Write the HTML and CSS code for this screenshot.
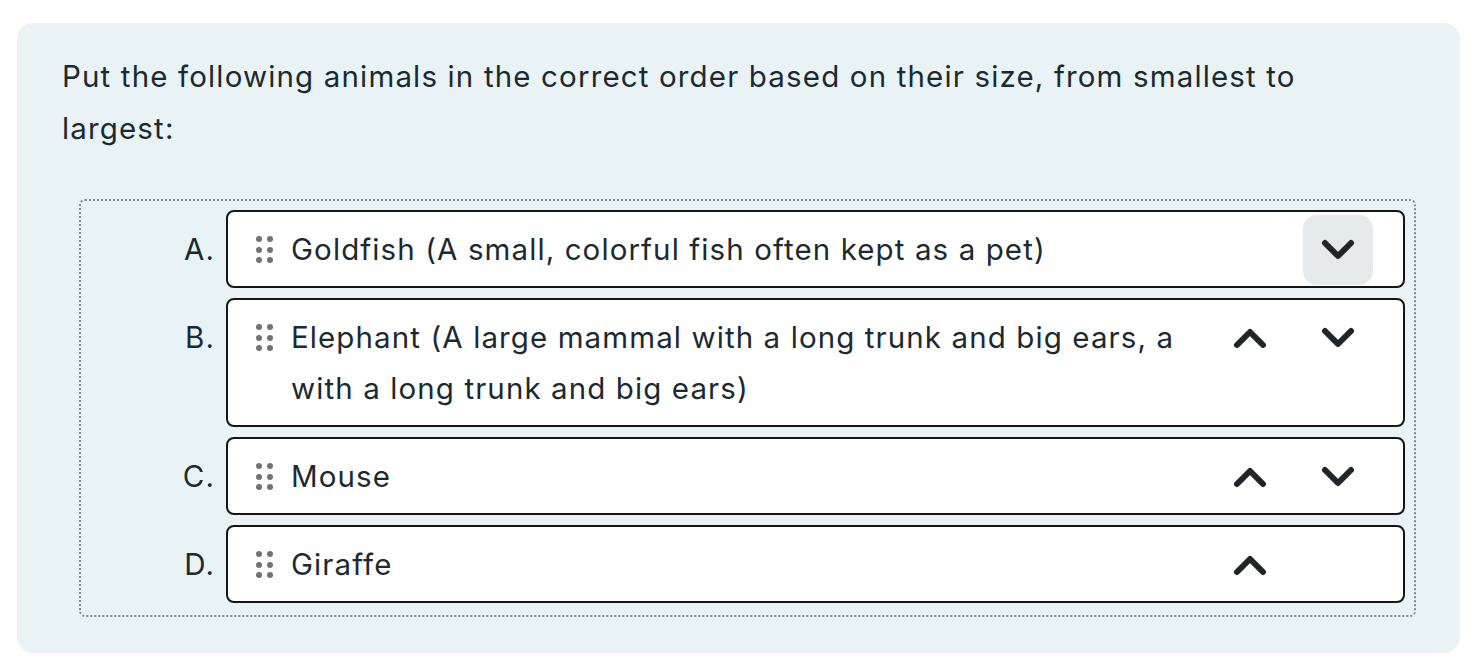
FILE: index.html
```html
<!DOCTYPE html>
<html>
<head>
<meta charset="utf-8">
<link rel="stylesheet" href="styles.css">
</head>
<body>
<div class="card">
  <p class="question">Put the following animals in the correct order based on their size, from smallest to largest:</p>
  <div class="list">
    <div class="row">
      <div class="label">A.</div>
      <div class="item">
        <span class="handle"><i></i><i></i><i></i><i></i><i></i><i></i></span>
        <span class="text">Goldfish (A small, colorful fish often kept as a pet)</span>
        <span class="btns">
          <span class="btn empty"></span>
          <span class="btn active"><svg viewBox="0 0 36 24" width="36" height="24"><polyline points="5,5 18,18 31,5"/></svg></span>
        </span>
      </div>
    </div>
    <div class="row">
      <div class="label">B.</div>
      <div class="item">
        <span class="handle"><i></i><i></i><i></i><i></i><i></i><i></i></span>
        <span class="text">Elephant (A large mammal with a long trunk and big ears, a with a long trunk and big ears)</span>
        <span class="btns">
          <span class="btn"><svg viewBox="0 0 36 24" width="36" height="24"><polyline points="5,19 18,6 31,19"/></svg></span>
          <span class="btn"><svg viewBox="0 0 36 24" width="36" height="24"><polyline points="5,5 18,18 31,5"/></svg></span>
        </span>
      </div>
    </div>
    <div class="row">
      <div class="label">C.</div>
      <div class="item">
        <span class="handle"><i></i><i></i><i></i><i></i><i></i><i></i></span>
        <span class="text">Mouse</span>
        <span class="btns">
          <span class="btn"><svg viewBox="0 0 36 24" width="36" height="24"><polyline points="5,19 18,6 31,19"/></svg></span>
          <span class="btn"><svg viewBox="0 0 36 24" width="36" height="24"><polyline points="5,5 18,18 31,5"/></svg></span>
        </span>
      </div>
    </div>
    <div class="row">
      <div class="label">D.</div>
      <div class="item">
        <span class="handle"><i></i><i></i><i></i><i></i><i></i><i></i></span>
        <span class="text">Giraffe</span>
        <span class="btns">
          <span class="btn"><svg viewBox="0 0 36 24" width="36" height="24"><polyline points="5,19 18,6 31,19"/></svg></span>
          <span class="btn empty"></span>
        </span>
      </div>
    </div>
  </div>
</div>
</body>
</html>
```
FILE: styles.css
```css
* { box-sizing: border-box; }
html, body { margin: 0; padding: 0; background: #ffffff; }
body {
  font-family: Inter, "Noto Sans", sans-serif;
  color: #1a2a30;
  padding: 23px 22px 19px 17px;
}
.card {
  background: #e9f2f5;
  border-radius: 16px;
  padding: 27px 44px 35px 45px;
  height: 630px;
}
.question {
  margin: 0;
  padding-right: 60px;
  font-size: 29.5px;
  letter-spacing: 1.15px;
  line-height: 52px;
}
.list {
  margin: 45px 0 0 17px;
  border: 2px dotted #85898c;
  border-radius: 6px;
  padding: 9px 9px 12px 9px;
  display: flex;
  flex-direction: column;
  gap: 10px;
}
.row {
  display: flex;
  align-items: flex-start;
}
.label {
  width: 125px;
  flex: none;
  text-align: right;
  font-size: 29.5px;
  letter-spacing: 1.1px;
  line-height: 51px;
  padding-top: 14px;
  margin-right: 11px;
}
.item {
  flex: 1;
  display: flex;
  align-items: flex-start;
  background: #ffffff;
  border: 2px solid #141618;
  border-radius: 8px;
  padding: 12px 30px 11px 28px;
  font-size: 29.5px;
  letter-spacing: 1.1px;
  line-height: 51px;
}
.handle {
  flex: none;
  width: 17px;
  height: 27px;
  margin-top: 12px;
  margin-right: 18px;
  display: grid;
  grid-template-columns: 6px 6px;
  column-gap: 5px;
  row-gap: 4.5px;
}
.handle i {
  display: block;
  width: 6px;
  height: 6px;
  border-radius: 50%;
  background: #737373;
}
.text {
  flex: 1;
  padding-right: 20px;
}
.btns {
  flex: none;
  display: flex;
  gap: 18px;
  margin: -9px 0 -10px;
}
.btn {
  width: 70px;
  height: 70px;
  border-radius: 14px;
  display: flex;
  align-items: center;
  justify-content: center;
}
.btn.active { background: #e7eaed; }
.btn svg polyline {
  fill: none;
  stroke: #212529;
  stroke-width: 6;
  stroke-linecap: round;
  stroke-linejoin: round;
}
```
